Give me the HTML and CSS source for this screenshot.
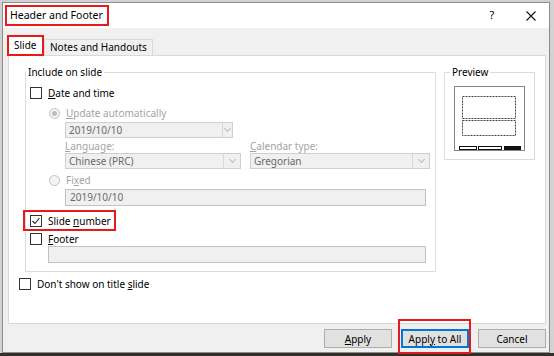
FILE: index.html
```html
<!DOCTYPE html>
<html lang="en">
  <head>
    <meta charset="UTF-8" />
    <title>Header and Footer</title>
    <link rel="stylesheet" href="styles.css">
  </head>
  <body>
    <div class="dialog">
      <div class="titlebar">
        <div class="title">Header and Footer</div>
        <div class="help">?</div>
        <div class="close">
          <svg width="10" height="10" viewBox="0 0 10 10">
            <path d="M0.5 0.5 L9.5 9.5 M9.5 0.5 L0.5 9.5" stroke="#111" stroke-width="1.1" />
          </svg>
        </div>
      </div>

      <div class="tabs">
        <div class="tab active">Slide</div>
        <div class="tab">Notes and Handouts</div>
      </div>

      <div class="panel">
        <div class="main">
          <fieldset class="group include">
            <legend>Include on slide</legend>

            <div class="row check r-date">
              <span class="box"></span>
              <span><u>D</u>ate and time</span>
            </div>

            <div class="row radio off r-auto">
              <span class="dot on"></span>
              <span><u>U</u>pdate automatically</span>
            </div>

            <div class="select s-date">
              <span class="value">2019/10/10</span>
              <span class="arrow"></span>
            </div>

            <div class="pair labels">
              <span class="lbl-lang"><u>L</u>anguage:</span>
              <span class="lbl-cal"><u>C</u>alendar type:</span>
            </div>

            <div class="pair">
              <div class="select s-lang">
                <span class="value">Chinese (PRC)</span>
                <span class="arrow"></span>
              </div>
              <div class="select s-cal">
                <span class="value">Gregorian</span>
                <span class="arrow"></span>
              </div>
            </div>

            <div class="row radio off r-fixed">
              <span class="dot"></span>
              <span>Fi<u>x</u>ed</span>
            </div>

            <div class="field f-fixed">2019/10/10</div>

            <div class="row check marked">
              <span class="box">
                <svg width="10" height="10" viewBox="0 0 10 10">
                  <path d="M1.5 5 L4 7.5 L8.5 2" fill="none" stroke="#222" stroke-width="1.1" />
                </svg>
              </span>
              <span>Slide <u>n</u>umber</span>
            </div>

            <div class="row check r-footer">
              <span class="box"></span>
              <span><u>F</u>ooter</span>
            </div>

            <div class="field f-footer"></div>
          </fieldset>

          <div class="row check r-dont">
            <span class="box"></span>
            <span>Don't show on title <u>s</u>lide</span>
          </div>
        </div>

        <fieldset class="group preview">
          <legend>Preview</legend>
          <svg class="thumb" width="71" height="65" viewBox="0 0 71 65">
            <rect x="0.5" y="0.5" width="70" height="64" fill="#fff" stroke="#858585" />
            <rect x="8.5" y="10.5" width="53" height="22" fill="none" stroke="#444" stroke-dasharray="2 1" />
            <rect x="8.5" y="34.5" width="53" height="15" fill="none" stroke="#444" stroke-dasharray="2 1" />
            <rect x="5.5" y="60.5" width="17" height="3" fill="#fff" stroke="#111" />
            <rect x="24.5" y="60.5" width="23" height="3" fill="#fff" stroke="#111" />
            <rect x="50" y="60" width="17" height="4" fill="#111" />
          </svg>
        </fieldset>
      </div>

      <div class="buttons">
        <button class="btn"><u>A</u>pply</button>
        <button class="btn default">Appl<u>y</u> to All</button>
        <button class="btn">Cancel</button>
      </div>
    </div>
  </body>
</html>
```

FILE: styles.css
```css
* {
  margin: 0;
  padding: 0;
  box-sizing: border-box;
  font-family: "Noto Sans", sans-serif;
}

body {
  width: 554px;
  height: 356px;
  overflow: hidden;
  font-size: 10px;
  color: #000;
  background: linear-gradient(to bottom, #d2d2d2 353px, #33302c 353px);
}

.dialog {
  margin: 2px 0 0 2px;
  width: 548px;
  height: 351px;
  border: 1px solid #8c8c8c;
  background: #f0f0f0;
  display: flex;
  flex-direction: column;
}

/* title bar */
.titlebar {
  height: 25px;
  background: #fff;
  display: flex;
  align-items: flex-start;
}

.title {
  margin: 2px 0 0 2px;
  height: 21px;
  padding: 0 4px 0 3px;
  border: 2px solid #e8191b;
  font-size: 10.5px;
  line-height: 17px;
}

.help {
  margin-left: auto;
  width: 40px;
  height: 25px;
  line-height: 24px;
  text-align: center;
  font-size: 11px;
}

.close {
  width: 37px;
  height: 25px;
  display: flex;
  align-items: center;
  justify-content: center;
}

/* tabs */
.tabs {
  height: 27px;
  display: flex;
  align-items: flex-end;
  padding-left: 4px;
}

.tab {
  height: 16px;
  padding: 0 5px;
  border: 1px solid #d9d9d9;
  border-bottom: none;
  line-height: 15px;
  background: #f0f0f0;
}

.tab.active {
  position: relative;
  z-index: 1;
  width: 37px;
  height: 21px;
  margin-bottom: -1px;
  padding: 0 0 0 5px;
  border: 2px solid #e8191b;
  background: #fff;
  line-height: 17px;
}

/* tab page */
.panel {
  margin-left: 5px;
  width: 538px;
  height: 269px;
  border: 1px solid #d9d9d9;
  background: #fff;
  display: flex;
  align-items: flex-start;
  gap: 8px;
  padding: 8px 0 0 16px;
}

.group {
  border: 1px solid #dcdcdc;
  min-width: 0;
}

.group legend {
  padding: 0 2px;
  line-height: 16px;
}

.include {
  width: 411px;
  padding: 0 0 8px 0;
}

.preview {
  width: 91px;
  padding: 0 0 8px 0;
}

.preview legend {
  margin-left: 5px;
}

.thumb {
  display: block;
  margin: 6px 0 0 9px;
}

/* rows */
.row {
  display: flex;
  align-items: center;
  height: 16px;
}

.check {
  padding-left: 4px;
  gap: 6px;
}

.box {
  width: 12px;
  height: 12px;
  border: 1px solid #333;
  background: #fff;
  display: flex;
  align-items: center;
  justify-content: center;
}

.radio {
  margin-left: 23px;
  gap: 6px;
}

.off {
  color: #a3a3a3;
}

.dot {
  width: 11px;
  height: 11px;
  border: 1px solid #c3c3c3;
  border-radius: 50%;
  background: #f4f4f4;
  display: flex;
  align-items: center;
  justify-content: center;
}

.dot.on::after {
  content: "";
  width: 5px;
  height: 5px;
  border-radius: 50%;
  background: #bdbdbd;
}

.r-date { margin-top: 5px; }
.r-auto { margin-top: 4px; }
.r-fixed { margin-top: 3px; }
.r-footer { height: 15px; }

.marked {
  width: fit-content;
  height: 21px;
  margin-top: 4px;
  margin-left: -3px;
  padding: 0 3px 0 5px;
  border: 2px solid #e8191b;
}

.r-dont {
  margin: 4px 0 0 -10px;
}

/* combo boxes and text fields */
.select {
  height: 16px;
  display: flex;
  border: 1px solid #cfcfcf;
  background: #f0f0f0;
  color: #6a6a6a;
}

.select .value {
  flex: 1;
  padding-left: 3px;
  line-height: 14px;
}

.select .arrow {
  width: 17px;
  border-left: 1px solid #d8d8d8;
  position: relative;
}

.select .arrow::after {
  content: "";
  position: absolute;
  left: 6px;
  top: 3px;
  width: 4px;
  height: 4px;
  border-right: 1px solid #bdbdbd;
  border-bottom: 1px solid #bdbdbd;
  transform: rotate(45deg);
}

.s-date {
  width: 168px;
  margin: 1px 0 0 39px;
}

.s-date .arrow {
  width: 10px;
}

.s-date .arrow::after {
  left: 2px;
}

.pair {
  display: flex;
  margin-left: 39px;
  gap: 9px;
}

.labels {
  height: 14px;
  margin-top: 1px;
  line-height: 14px;
  color: #a3a3a3;
  gap: 0;
}

.lbl-lang {
  width: 185px;
}

.s-lang { width: 176px; }
.s-cal { width: 180px; }

.field {
  height: 17px;
  border: 1px solid #c2c2c2;
  background: #f0f0f0;
  color: #6a6a6a;
  padding-left: 4px;
  line-height: 15px;
}

.f-fixed {
  width: 361px;
  margin: 1px 0 0 39px;
}

.f-footer {
  width: 378px;
  margin-left: 22px;
}

/* buttons */
.buttons {
  display: flex;
  justify-content: flex-end;
  gap: 9px;
  margin-top: 5px;
  padding-right: 3px;
}

.btn {
  width: 68px;
  height: 19px;
  border: 1px solid #adadad;
  background: #e1e1e1;
  font-size: 10px;
  color: #000;
}

.btn.default {
  position: relative;
  border: 2px solid #0078d7;
}

.btn.default::after {
  content: "";
  position: absolute;
  left: -5px;
  right: -4px;
  top: -12px;
  bottom: -8px;
  border: 2px solid #e8191b;
}
```
